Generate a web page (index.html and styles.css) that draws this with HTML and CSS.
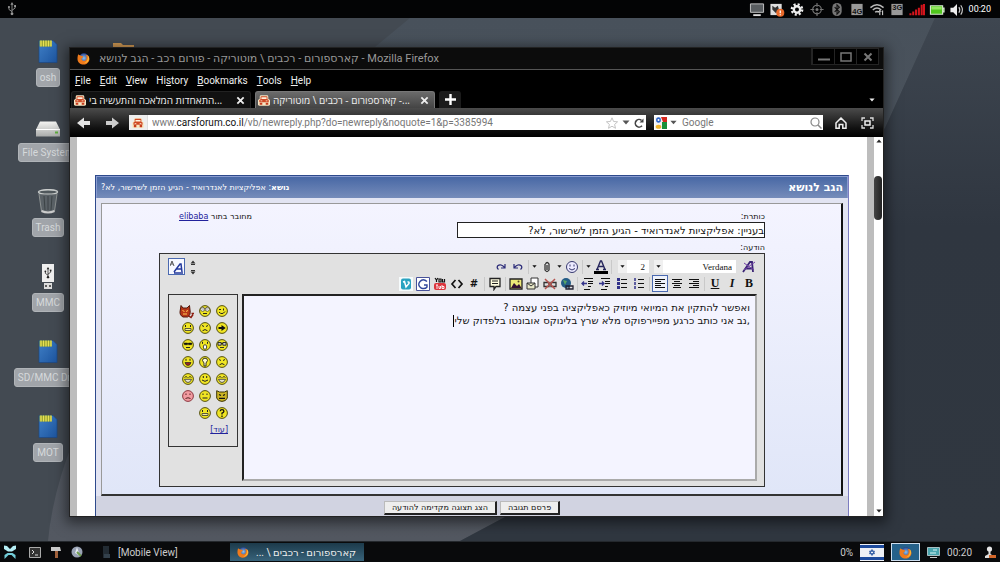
FILE: index.html
```html
<!DOCTYPE html>
<html lang="en">
<head>
<meta charset="utf-8">
<title>Desktop</title>
<link rel="stylesheet" href="styles.css">
</head>
<body>
<svg class="sprite" aria-hidden="true">
  <defs>
    <linearGradient id="sdblue" x1="0" y1="0" x2="1" y2="1"><stop offset="0" stop-color="#3f7fc6"/><stop offset="1" stop-color="#1d559f"/></linearGradient>
    <linearGradient id="silver" x1="0" y1="0" x2="0" y2="1"><stop offset="0" stop-color="#f4f4f2"/><stop offset="1" stop-color="#a9abaa"/></linearGradient>
    <linearGradient id="sweep" x1="0" y1="0" x2="0" y2="1"><stop offset="0" stop-color="#48515b"/><stop offset="1" stop-color="#535861"/></linearGradient>
    <linearGradient id="slate" x1="0" y1="0" x2="0" y2="1"><stop offset="0" stop-color="#3e4650"/><stop offset=".4" stop-color="#2f3640"/><stop offset="1" stop-color="#303740"/></linearGradient>
    <radialGradient id="ffglobe"><stop offset="0" stop-color="#8fc3ee"/><stop offset="1" stop-color="#23408d"/></radialGradient>
  </defs>
  <symbol id="sd" viewBox="0 0 20 24"><path d="M1 1h14l4 4v18H1z" fill="url(#sdblue)" stroke="#1b4785" stroke-width=".7"/><path d="M1.500 1h12v6H1.500z" fill="#8c9a2c"/><path d="M3 1v6M5.500 1v6M8 1v6M10.500 1v6M13 1v6" stroke="#e9e255" stroke-width="1.400"/></symbol>
  <symbol id="firefox" viewBox="0 0 16 16"><circle cx="8.500" cy="7.500" r="6" fill="url(#ffglobe)"/><path d="M1.500 2.500C2 4 3 4 5 4.500 7 5 8 5 7.500 6.500 6.500 7.500 5.500 7.500 5.500 9c.8 2 3.500 2.700 5.300 1.200C12.500 8.500 12 5.500 10.500 3.500 14 4 15.500 6.500 15.300 9 14.800 13 12 15.500 8.200 15.500 4 15.500.6 12.500.6 8.500.6 6 1 4.500 1.500 2.500z" fill="#ee7a1c"/><path d="M13 3.500c2 2.500 2.200 5.500.6 8-1.500 2-4 2.700-6 2.200 4 0 7-4.200 5.400-10.200z" fill="#ffc23a"/></symbol>
  <symbol id="car" viewBox="0 0 14 12"><path d="M2 1.500Q2 0 3.500 0h7Q12 0 12 1.500V4l2 1.500V11q-.500 1-2 1H2Q.5 12 0 11V5.500L2 4z" fill="#f7e6c4"/><path d="M3 4.500V2q0-1 1-1h6q1 0 1 1v2.500l1.500 1V8h-11V5.500z" fill="#cf4a26"/><path d="M4 2.300h6v2H4zM3 6h2v1H3zM9 6h2v1H9z" fill="#fff3df"/><path d="M2 8.500h3V11H2zM9 8.500h3V11H9z" fill="#c63b1c"/></symbol>
  <symbol id="usb" viewBox="0 0 12 16"><path d="M6 2.500V13M6 11 2.500 8.500V6M6 9.500 9.500 7V5" stroke="currentColor" fill="none"/><path d="M6 0l1.800 3H4.200z" fill="currentColor"/><circle cx="6" cy="13.500" r="1.600" fill="currentColor"/><circle cx="2.500" cy="5.700" r="1.200" fill="currentColor"/><path d="M8.400 3.500h2.200v2.200H8.400z" fill="currentColor"/></symbol>
  <symbol id="x" viewBox="0 0 10 10"><path d="M1.500 1.500l7 7M8.500 1.500l-7 7" stroke="currentColor" stroke-width="2" fill="none"/></symbol>
  <symbol id="down" viewBox="0 0 8 5"><path d="M.5.500h7L4 4.500z" fill="currentColor"/></symbol>
  <symbol id="face" viewBox="0 0 12 12"><circle cx="6" cy="6" r="5.400" fill="#f0e523" stroke="#54500e" stroke-width="1"/></symbol>
  <symbol id="s-wink" viewBox="0 0 12 12"><use href="#face"/><path d="M3 4.500h2M7.500 3.500v2M3 7q3 3.500 6-.5" stroke="#222" fill="none"/></symbol>
  <symbol id="s-eyes" viewBox="0 0 12 12"><use href="#face"/><circle cx="3.700" cy="4.300" r="2" fill="#fff" stroke="#333" stroke-width=".7"/><circle cx="8.300" cy="4.300" r="2" fill="#fff" stroke="#333" stroke-width=".7"/><path d="M3.500 4h1M7.500 4h1M4 8.500h4" stroke="#222"/></symbol>
  <symbol id="s-frown" viewBox="0 0 12 12"><use href="#face"/><path d="M3 3.500l2 1M9 3.500l-2 1M3.500 8.800q2.500-2.500 5 0" stroke="#222" fill="none"/></symbol>
  <symbol id="s-mad" viewBox="0 0 12 12"><use href="#face"/><path d="M3.500 3v2M8.500 3v2" stroke="#222"/><path d="M3 6.500h6v2H3z" fill="#f3ee9a" stroke="#333" stroke-width=".8"/></symbol>
  <symbol id="s-arrow" viewBox="0 0 12 12"><use href="#face"/><path d="M2.500 5h3V3L9.700 6 5.500 9V7h-3z" fill="#111"/></symbol>
  <symbol id="s-glasses" viewBox="0 0 12 12"><use href="#face"/><path d="M2 3.500h3.200v2.700H2zM6.800 3.500H10v2.700H6.800zM5 4.500h2M4 8.500h4" stroke="#222" stroke-width=".9" fill="#ccc"/></symbol>
  <symbol id="s-shock" viewBox="0 0 12 12"><use href="#face"/><path d="M3.500 2.800v2M8.500 2.800v2" stroke="#222"/><ellipse cx="6" cy="8" rx="1.700" ry="2.300" fill="#fff" stroke="#222" stroke-width=".8"/></symbol>
  <symbol id="s-cool" viewBox="0 0 12 12"><use href="#face"/><path d="M2 4h3.500v1.700H2.500zM6.500 4H10l-.5 1.700h-3zM5 4.500h2" fill="#111" stroke="#111" stroke-width=".5"/><path d="M4 8.500h4" stroke="#222"/></symbol>
  <symbol id="s-grin" viewBox="0 0 12 12"><use href="#face"/><path d="M4 2.800v2M8 2.800v2" stroke="#222"/><path d="M3 6.500h6Q8.300 9.500 6 9.500 3.700 9.500 3 6.500z" fill="#922" stroke="#222" stroke-width=".7"/></symbol>
  <symbol id="s-idea" viewBox="0 0 12 12"><use href="#face"/><path d="M6 2.200q2.500 0 2.500 2.300L7 7v3H5V7L3.500 4.500Q3.500 2.200 6 2.200z" fill="#fffbd0" stroke="#222" stroke-width=".9"/></symbol>
  <symbol id="s-lol" viewBox="0 0 12 12"><use href="#face"/><path d="M2.500 4.500l1.500-1 1.500 1M6.500 4.500l1.500-1 1.500 1" stroke="#222" fill="none" stroke-width=".9"/><path d="M2.500 6.300h7Q8.500 9.500 6 9.500 3.500 9.500 2.500 6.300z" fill="#e9e7cf" stroke="#333" stroke-width=".8"/></symbol>
  <symbol id="s-smile" viewBox="0 0 12 12"><use href="#face"/><path d="M4.300 3v2M7.700 3v2M3 7q3 2.700 6 0" stroke="#222" fill="none"/></symbol>
  <symbol id="s-flat" viewBox="0 0 12 12"><use href="#face"/><path d="M4 3.500v1.500M8 3.500v1.500M3.500 8h5" stroke="#222" fill="none"/></symbol>
  <symbol id="s-cat" viewBox="0 0 12 12"><path d="M.7.700 3.500 2h5L11.300.700V8Q10 11.400 6 11.400 2 11.400.7 8z" fill="#cdb625" stroke="#3c3508"/><path d="M3 4.500l2 1M9 4.500l-2 1M3 8.300h6" stroke="#111" stroke-width="1.300"/></symbol>
  <symbol id="s-blush" viewBox="0 0 12 12"><circle cx="6" cy="6" r="5.400" fill="#f29aa0" stroke="#8d3840" stroke-width="1"/><path d="M4 3.500v1.500M8 3.500v1.500M3.500 8.500q2.500-1.500 5 0" stroke="#522" fill="none"/></symbol>
  <symbol id="s-ask" viewBox="0 0 12 12"><use href="#face"/><path d="M4.200 4.300Q4.300 2.700 6 2.700q1.900 0 1.900 1.500Q7.900 5.400 6 6.200v1.200M6 8.500V10" stroke="#111" stroke-width="1.300" fill="none"/></symbol>
  <symbol id="s-devil" viewBox="0 0 15 14"><path d="M2 .5 4 3h4l2.500-2.500L11 5q1 5-2.500 7H4Q0 10 1.300 5z" fill="#b73719" stroke="#52180c"/><path d="M3.500 5.500l2 1M9 5.500l-2 1M4 9h4" stroke="#fc5" /><path d="M9 10.500l3 2 2-3M12.500 8.500h2.500" stroke="#8d1d10" stroke-width="1.500" fill="none"/></symbol>
</svg>

<div class="screen">
  <header class="statusbar">
    <svg class="usb" width="12" height="14"><use href="#usb"/></svg>
    <div class="tray">
      <svg viewBox="0 0 16 16"><path d="M1 2h14v9H1z" fill="#595d60" stroke="#c6c6c6"/><path d="M4 13h8v2H4z" fill="#ddd"/></svg>
      <svg viewBox="0 0 16 16"><path d="M1 2h12v12H1z" fill="#ddd"/><path d="M3 4l3 2 3-2 1 4-3 4-4-4z" fill="#333"/><circle cx="11.500" cy="11.500" r="4.300" fill="#e8692a"/><path d="M11.500 9v3M11.500 13v1" stroke="#fff" stroke-width="1.400"/></svg>
      <svg viewBox="0 0 16 16"><circle cx="8" cy="8" r="5.500" fill="none" stroke="#eee" stroke-width="2.600" stroke-dasharray="2.200 2.120"/><circle cx="8" cy="8" r="3.400" fill="none" stroke="#eee" stroke-width="2.600"/></svg>
      <svg viewBox="0 0 16 16"><circle cx="8" cy="8" r="4.600" fill="none" stroke="#777" stroke-width="1.200"/><circle cx="8" cy="8" r="1.600" fill="#777"/><path d="M8 1v4M8 11v4M1 8h4M11 8h4" stroke="#777" stroke-width="1.200"/></svg>
      <svg viewBox="0 0 16 16"><rect x="3" y="1" width="10" height="14" rx="5" fill="#777"/><path d="M5.500 5.500l5 5L8 13V3l2.500 2.500-5 5" stroke="#111" fill="none" stroke-width="1.200"/></svg>
      <svg viewBox="0 0 16 16"><path d="M2 2h12v12H2z" fill="#999"/><text x="3" y="13" class="net">4G</text></svg>
      <svg viewBox="0 0 16 16"><path d="M1 6q7-6 14 0M3.500 8.500q4.500-4 9 0M6 11q2-1.800 4 0" stroke="#bbb" fill="none" stroke-width="1.500"/><path d="M11 14V9M9.500 10.500 11 9l1.500 1.500M14 9v5" stroke="#eee" fill="none"/></svg>
      <svg viewBox="0 0 16 16"><path d="M2 2h12v12H2z" fill="#999"/><text x="3" y="9" class="net">3G</text></svg>
      <svg viewBox="0 0 16 16"><path d="M1 14v-2M4 14v-4M7 14V8M10 14V6M13 14V3M15.500 14V2" stroke="#d4141c" stroke-width="2.200"/></svg>
      <svg viewBox="0 0 16 16"><path d="M1 4h13v9H1zM14 6.500h1.500v4H14" fill="#4fc61c" stroke="#d9e8d2" stroke-width="1.200"/><path d="M2 5h11v3H2z" fill="#93e661"/></svg>
      <svg viewBox="0 0 16 16"><path d="M1 6h3l4-4v13l-4-4H1z" fill="#eee"/><path d="M10 5.500q2 3 0 6M12 3.500q3.500 5 0 10" stroke="#ccc" fill="none" stroke-width="1.200"/></svg>
      <time class="clock">00:20</time>
    </div>
  </header>

  <main class="desktop">
    <svg class="wallpaper" viewBox="0 0 1000 523" preserveAspectRatio="none">
      <path d="M0 0h1000v523H0z" fill="#434a52"/>
      <path d="M48 523Q56 440 110 350L375 29 410 0H935L885 110 505 499 460 523z" fill="url(#sweep)"/>
      <path d="M1000 0H935L885 110 505 499 460 523H1000z" fill="url(#slate)"/>
    </svg>

    <div class="shortcuts">
      <div class="shortcut"><svg width="20" height="24"><use href="#sd"/></svg><span>osh</span></div>
      <div class="shortcut"><svg width="26" height="24" viewBox="0 0 26 24"><path d="M5 7h16l4 8v7H1v-7z" fill="url(#silver)"/><path d="M1 15h24" stroke="#fff"/><path d="M20 18h3" stroke="#5fae3f" stroke-width="2"/></svg><span>File System</span></div>
      <div class="shortcut"><svg width="22" height="25" viewBox="0 0 22 25"><ellipse cx="11" cy="3" rx="9.500" ry="2.300" fill="#50585c" stroke="#c9cccb" stroke-width="1.500"/><path d="M2 5l2.500 17q6.500 3 13 0L20 5" fill="#6b7274" fill-opacity=".6" stroke="#8d9292"/><path d="M7 7l1 14M11 7v14M15 7l-1 14" stroke="#3c4346"/><path d="M4.500 22q6.500 3 13 0" stroke="#ccc" stroke-width="2" fill="none"/></svg><span>Trash</span></div>
      <div class="shortcut"><svg width="14" height="25" viewBox="0 0 14 25"><path d="M1 0h12v18H1z" fill="#efefef"/><path d="M3 19h8v6H3z" fill="#ddd"/><path d="M5 21v2M9 21v2" stroke="#333" stroke-width="1.500"/><use href="#usb" x="2" y="3" width="10" height="12" color="#222"/></svg><span>MMC</span></div>
      <div class="shortcut"><svg width="20" height="24"><use href="#sd"/></svg><span>SD/MMC Driv</span></div>
      <div class="shortcut"><svg width="20" height="24"><use href="#sd"/></svg><span>MOT</span></div>
    </div>
    <svg class="folder" width="24" height="20" viewBox="0 0 24 20"><path d="M1 1h8l2 2h11v15H1z" fill="#d19a54"/><path d="M1 5h22v13H1z" fill="#eab876"/></svg>

    <section class="window">
      <div class="titlebar">
        <svg width="13" height="13"><use href="#firefox"/></svg>
        <h1 dir="ltr">קארספורום - רכבים \ מוטוריקה - פורום רכב - הגב לנושא - Mozilla Firefox</h1>
        <div class="wincontrols">
          <button aria-label="Minimize"><svg width="12" height="10" viewBox="0 0 12 10"><path d="M0 7.500h12" stroke="#777" stroke-width="2"/></svg></button>
          <button aria-label="Maximize"><svg width="12" height="10" viewBox="0 0 12 10"><path d="M1 1h10v8H1z" stroke="#777" stroke-width="1.500" fill="none"/></svg></button>
          <button aria-label="Close"><svg width="10" height="10" color="#777"><use href="#x"/></svg></button>
        </div>
      </div>
      <nav class="menubar">
        <button><u>F</u>ile</button><button><u>E</u>dit</button><button><u>V</u>iew</button><button>Hi<u>s</u>tory</button><button><u>B</u>ookmarks</button><button><u>T</u>ools</button><button><u>H</u>elp</button>
      </nav>
      <div class="tabs">
        <div class="tab"><svg width="12" height="11"><use href="#car"/></svg><span dir="ltr">התאחדות המלאכה והתעשיה בי...</span><button aria-label="Close tab"><svg width="9" height="9"><use href="#x"/></svg></button></div>
        <div class="tab active"><svg width="12" height="11"><use href="#car"/></svg><span dir="ltr">קארספורום - רכבים \ מוטוריקה -...</span><button aria-label="Close tab"><svg width="9" height="9"><use href="#x"/></svg></button></div>
        <button class="newtab" aria-label="New tab"><svg width="11" height="11" viewBox="0 0 11 11"><path d="M5.500 0v11M0 5.500h11" stroke="#fff" stroke-width="2.400"/></svg></button>
        <button class="alltabs" aria-label="List all tabs"><svg width="6" height="4"><use href="#down"/></svg></button>
      </div>
      <div class="navbar">
        <button aria-label="Back"><svg width="14" height="12" viewBox="0 0 14 12"><path d="M0 6l7-5.500V4h6v4H7v3.500z" fill="#e4e4e4"/></svg></button>
        <button class="forward" aria-label="Forward"><svg width="14" height="12" viewBox="0 0 14 12"><path d="M14 6 7 .5V4H1v4h6v3.500z" fill="#ccc"/></svg></button>
        <div class="urlbar">
          <span class="identity"><svg width="12" height="10"><use href="#car"/></svg></span>
          <span class="url" role="textbox">www.<b>carsforum.co.il</b>/vb/newreply.php?do=newreply&amp;noquote=1&amp;p=3385994</span>
          <svg width="12" height="12" viewBox="0 0 12 12"><path d="M6 .8 7.600 4.500l4 .3-3 2.600.9 3.900L6 9.200l-3.500 2.100.9-3.900-3-2.600 4-.3z" fill="#fff" stroke="#c4c4c4"/></svg>
          <svg width="8" height="5" color="#555"><use href="#down"/></svg>
          <svg width="10" height="10" viewBox="0 0 10 10"><path d="M8 7.800A3.800 3.800 0 1 1 7.500 2.300" stroke="#444" stroke-width="1.600" fill="none"/><path d="M5.500 4.500h4v-4z" fill="#444"/></svg>
        </div>
        <div class="searchbar">
          <svg width="12" height="12" viewBox="0 0 12 12"><path d="M0 0h12v12H0z" fill="#f3f3f3"/><path d="M6 0h6v5H8z" fill="#d6281f"/><path d="M7 5h5v7H7z" fill="#188f3b"/><ellipse cx="3.500" cy="3" rx="2.400" ry="2.700" fill="#2a62c8"/><ellipse cx="3.500" cy="9.700" rx="2.800" ry="2" fill="#f1b52b"/><circle cx="3.500" cy="3" r="1" fill="#fff"/></svg>
          <svg width="7" height="5" color="#555"><use href="#down"/></svg>
          <input type="search" placeholder="Google" aria-label="Search">
          <svg width="12" height="12" viewBox="0 0 12 12"><circle cx="5" cy="5" r="4" stroke="#888" stroke-width="1.200" fill="none"/><path d="M8 8l3.500 3.500" stroke="#888" stroke-width="1.500"/></svg>
        </div>
        <button aria-label="Home"><svg width="12" height="12" viewBox="0 0 12 12"><path d="M1 6 6 1l5 5v5.200H7.800V7.500H4.200v3.700H1z" stroke="#eee" stroke-width="1.500" fill="none"/></svg></button>
        <button class="full" aria-label="Full screen"><svg width="13" height="12" viewBox="0 0 13 12"><path d="M1 4V1h3M9 1h3v3M12 8v3H9M4 11H1V8" stroke="#ddd" stroke-width="1.300" fill="none"/><path d="M4 4h5v4H4z" stroke="#eee" stroke-width="1.500" fill="none"/></svg></button>
      </div>

      <div class="viewport">
        <div class="page" dir="rtl" lang="he">
          <form class="panel">
            <div class="panelhead">
              <h2>הגב לנושא</h2>
              <p><b>נושא</b>: אפליקציות לאנדרואיד - הגיע הזמן לשרשור, לא?</p>
            </div>
            <div class="panelbody">
              <div class="fields">
                <div class="subjectrow">
                  <div class="subject">
                    <label for="subject">כותרת:</label>
                    <input id="subject" type="text" value="בעניין: אפליקציות לאנדרואיד - הגיע הזמן לשרשור, לא?">
                  </div>
                  <p class="login">מחובר בתור <a href="#user">elibaba</a></p>
                </div>
                <label for="message">הודעה:</label>
                <div class="editor">
                  <div class="toolbars">
                    <div class="rows">
                      <div class="row">
                        <button type="button" aria-label="הסר עיצוב"><svg viewBox="0 0 14 14"><path d="M1 12 8 2h2l1 10M4 8.500h7" stroke="#3a2474" stroke-width="1.800" fill="none"/><path d="M2 3l10 7M2 10l11-8" stroke="#7240a8" stroke-width="1"/></svg></button>
                        <span class="drop font"><select aria-label="גופן"><option>Verdana</option></select><svg width="5" height="3"><use href="#down"/></svg></span>
                        <span class="drop size"><select aria-label="גודל"><option>2</option></select><svg width="5" height="3"><use href="#down"/></svg></span>
                        <i class="sep"></i>
                        <button type="button" aria-label="צבע"><svg viewBox="0 0 14 14"><path d="M3 9.500 6.500 1h1L11 9.500M4.500 6.500h5M2 9.500h3M9 9.500h3" stroke="#26265c" stroke-width="1.400" fill="none"/><path d="M0 11h14v3H0z" fill="#000"/></svg></button>
                        <svg class="tick" width="5" height="3"><use href="#down"/></svg>
                        <i class="sep"></i>
                        <button type="button" aria-label="סמיילי"><svg viewBox="0 0 14 14"><circle cx="7" cy="7" r="5.500" fill="#eceaff" stroke="#36386e"/><path d="M5 4.500v2M9 4.500v2M4 8.500q3 3 6 0" stroke="#36386e" fill="none"/></svg></button>
                        <svg class="tick" width="5" height="3"><use href="#down"/></svg>
                        <button type="button" aria-label="קובץ מצורף"><svg viewBox="0 0 14 14"><path d="M5 4v6q2 3 4 0V4Q7 1 5.500 4M7 5v5" stroke="#333" stroke-width="1.300" fill="none"/></svg></button>
                        <svg class="tick" width="5" height="3"><use href="#down"/></svg>
                        <i class="sep"></i>
                        <button type="button" aria-label="בטל"><svg viewBox="0 0 14 14"><path d="M3 4v4h4M3 8q4-5 7.500-2 1 2-1 3.500" stroke="#2b2b78" stroke-width="1.200" fill="none"/></svg></button>
                        <button type="button" aria-label="בצע שוב"><svg viewBox="0 0 14 14"><path d="M11 4v4H7M11 8Q7 3 3.500 6 2.500 8 4.500 9.500" stroke="#2b2b78" stroke-width="1.200" fill="none"/></svg></button>
                      </div>
                      <div class="row">
                        <button type="button" class="glyph"><b>B</b></button>
                        <button type="button" class="glyph"><em>I</em></button>
                        <button type="button" class="glyph"><u>U</u></button>
                        <i class="sep"></i>
                        <button type="button" aria-label="יישור לימין"><svg viewBox="0 0 14 14"><path d="M2 2.500h10M6 4.500h6M2 6.500h10M6 8.500h6M2 10.500h10" stroke="#111"/></svg></button>
                        <button type="button" aria-label="מרכז"><svg viewBox="0 0 14 14"><path d="M2 2.500h10M4 4.500h6M2 6.500h10M4 8.500h6M3 10.500h8" stroke="#111"/></svg></button>
                        <button type="button" class="pressed" aria-label="יישור לשמאל"><svg viewBox="0 0 14 14"><path d="M2 2.500h10M2 4.500h6M2 6.500h10M2 8.500h6M2 10.500h10" stroke="#111"/></svg></button>
                        <i class="sep"></i>
                        <button type="button" aria-label="רשימה ממוספרת"><svg viewBox="0 0 14 14"><path d="M6 2.500h6M6 6.500h6M6 10.500h6" stroke="#111"/><path d="M3 1v3M3 5v3M3 9v3" stroke="#33338a" stroke-width="1.500"/></svg></button>
                        <button type="button" aria-label="רשימה"><svg viewBox="0 0 14 14"><path d="M6 2.500h6M6 6.500h6M6 10.500h6" stroke="#111"/><path d="M2 1h3v3H2zM2 5h3v3H2zM2 9h3v3H2z" fill="#33338a"/></svg></button>
                        <button type="button" aria-label="הקטן הזחה"><svg viewBox="0 0 14 14"><path d="M3 1.500h9M7 4.500h5M7 6.500h5M7 9.500h3M3 12.500h6" stroke="#111"/><path d="M1 6.500h5M4 4.500l2 2-2 2" stroke="#33338a" stroke-width="1.300" fill="none"/></svg></button>
                        <button type="button" aria-label="הגדל הזחה"><svg viewBox="0 0 14 14"><path d="M3 1.500h9M7 4.500h5M7 6.500h5M7 9.500h3M3 12.500h6" stroke="#111"/><path d="M1 6.500h5M3 4.500l-2 2 2 2" stroke="#33338a" stroke-width="1.300" fill="none"/></svg></button>
                        <i class="sep"></i>
                        <button type="button" aria-label="קישור"><svg viewBox="0 0 14 14"><circle cx="6" cy="6" r="5" fill="#245c86"/><path d="M3 3l4 1-2 4z" fill="#58a565"/><path d="M6 9h3v3H6zM9 9h4v3H9z" stroke="#223" stroke-width="1.300" fill="none"/></svg></button>
                        <button type="button" aria-label="הסר קישור"><svg viewBox="0 0 14 14"><path d="M1 5.500h5v4H1zM8 5.500h5v4H8z" stroke="#333" stroke-width="1.300" fill="none"/><path d="M2 2l10 10M12 2 2 12" stroke="#b5544f" stroke-width="1.500"/></svg></button>
                        <button type="button" aria-label="דואר"><svg viewBox="0 0 14 14"><path d="M5 1h7v9H5z" fill="#fff" stroke="#333"/><path d="M1 6h8v6H1z" fill="#e8e8c8" stroke="#333"/><path d="M1 6l4 3 4-3" stroke="#333" fill="none"/></svg></button>
                        <button type="button" aria-label="תמונה"><svg viewBox="0 0 14 14"><path d="M1 2h12v10H1z" fill="#eeea78" stroke="#222" stroke-width="1.300"/><path d="M2 11l3-5 3 3 2-2 2.500 4z" fill="#313"/><circle cx="9.500" cy="4.500" r="1" fill="#542"/></svg></button>
                        <i class="sep"></i>
                        <button type="button" aria-label="ציטוט"><svg viewBox="0 0 14 14"><path d="M2 1.500h10v8H8l-2 3v-3H2z" fill="#fffde0" stroke="#222" stroke-width="1.300"/><path d="M4 4h6M4 6.500h6" stroke="#222"/></svg></button>
                        <i class="sep"></i>
                        <button type="button" class="glyph hash">#</button>
                        <button type="button" aria-label="HTML"><svg viewBox="0 0 14 14"><path d="M5.500 3 2 7l3.500 4M8.500 3 12 7l-3.500 4" stroke="#111" stroke-width="1.700" fill="none"/></svg></button>
                        <button type="button" aria-label="YouTube"><svg viewBox="0 0 14 14"><path d="M2 1l1.500 2L5 1M3.500 3v2M6 2h2v3H6zM9.500 2v3h2V2" stroke="#111" stroke-width="1.200" fill="none"/><rect x="1" y="6" width="12" height="7" rx="2" fill="#dc343c"/><path d="M3 8h2M4 8v4M6 9v2.500h1.500V9M9 8v3.500h2V9.500H9" stroke="#fff" stroke-width=".9" fill="none"/></svg></button>
                        <button type="button" aria-label="Google"><svg viewBox="0 0 14 14"><path d="M.5.500h13v13H.5z" fill="#fff" stroke="#48529a"/><path d="M11 4.500Q7 1 4 4.500T5 11q4 1.500 6-1V8H8" stroke="#31479c" stroke-width="1.400" fill="none"/></svg></button>
                        <button type="button" aria-label="Vimeo"><svg viewBox="0 0 14 14"><path d="M0 0h14v14H0z" fill="#f6fbfc"/><rect x="2" y="1.500" width="10" height="11" rx="2" fill="#2aa3c0"/><path d="M4 5l1.500-.5L7 10l3-3.500q.5-2-1.500-1.500" stroke="#fff" stroke-width="1.500" fill="none"/></svg></button>
                      </div>
                    </div>
                    <div class="resize">
                      <svg width="8" height="18" viewBox="0 0 8 18"><path d="M2 6.500h4M2 12.500h4" stroke="#333"/><path d="M1.500 5.500h5L4 2.500zM1.500 13.500h5L4 16.500z" fill="#333"/></svg>
                      <button type="button" class="mode" aria-label="מצב עריכה"><svg width="14" height="14" viewBox="0 0 14 14"><path d="M0 6l2-5 2 5M1 4h2" stroke="#555" fill="none"/><path d="M4 12l6-8h1l1 8M6 9h6M4 13h9" stroke="#23389c" stroke-width="1.500" fill="none"/></svg></button>
                    </div>
                  </div>
                  <div class="compose">
                    <div class="message">
                      <textarea id="message">ואפשר להתקין את המיואי מיוזיק כאפליקציה בפני עצמה ?
,נב אני כותב כרגע מפיירפוקס מלא שרץ בלינוקס אובונטו בלפדוק שלי</textarea>
                      <span class="caret"></span>
                    </div>
                    <div class="smilies">
                      <div class="grid">
                        <svg><use href="#s-wink"/></svg><svg><use href="#s-eyes"/></svg><svg class="big"><use href="#s-devil"/></svg>
                        <svg><use href="#s-arrow"/></svg><svg><use href="#s-frown"/></svg><svg><use href="#s-mad"/></svg>
                        <svg><use href="#s-glasses"/></svg><svg><use href="#s-shock"/></svg><svg><use href="#s-cool"/></svg>
                        <svg><use href="#s-frown"/></svg><svg><use href="#s-idea"/></svg><svg><use href="#s-grin"/></svg>
                        <svg><use href="#s-lol"/></svg><svg><use href="#s-smile"/></svg><svg><use href="#s-lol"/></svg>
                        <svg><use href="#s-cat"/></svg><svg><use href="#s-flat"/></svg><svg><use href="#s-blush"/></svg>
                        <svg><use href="#s-ask"/></svg><svg><use href="#s-mad"/></svg>
                      </div>
                      <a href="#more">[עוד]</a>
                    </div>
                  </div>
                </div>
              </div>
            </div>
            <div class="actions">
              <button type="submit">פרסם תגובה</button>
              <button type="button">הצג תצוגה מקדימה להודעה</button>
            </div>
          </form>
        </div>
        <div class="scrollbar">
          <svg width="6" height="4" class="up"><use href="#down"/></svg>
          <span class="thumb"></span>
          <svg width="6" height="4"><use href="#down"/></svg>
        </div>
      </div>
    </section>
  </main>

  <footer class="taskbar">
    <div class="launchers">
      <svg class="logo" width="14" height="16" viewBox="0 0 14 16"><path d="M1 1.500 4 2l3 3 3-3 3-.5v3.500L9 7.500H5L1 5z" fill="#b5edf5"/><path d="M1.500 15V11l3-2h5l3 2v4l-4-4h-3z" fill="#72cdd9"/></svg>
      <svg width="12" height="11" viewBox="0 0 12 11"><path d="M.5.500h11v10H.5z" fill="#333" stroke="#aaa"/><path d="M3 3l2 2-2 2M6 8h3" stroke="#ddd" fill="none"/></svg>
      <svg width="12" height="12" viewBox="0 0 12 12"><path d="M1 1h9l1 4H1z" fill="#c9c9c9"/><path d="M5 5h3v7H5z" fill="#a1613c"/></svg>
      <svg width="12" height="12" viewBox="0 0 12 12"><circle cx="6" cy="6" r="5.500" fill="#9aa3b5"/><path d="M6 1 4 7l5 3z" fill="#e4eaf1"/><path d="M6 6l4 4" stroke="#6c9a4e" stroke-width="2"/></svg>
    </div>
    <button class="task"><svg width="9" height="12" viewBox="0 0 9 12"><path d="M1 0h6v12H1z" fill="#222b33"/><path d="M2 8h6v4H2z" fill="#33404b"/></svg>[Mobile View]</button>
    <button class="task current"><svg width="12" height="12"><use href="#firefox"/></svg><span dir="rtl">קארספורום - רכבים \ ...</span></button>
    <div class="indicators">
      <span class="cpu">0%</span>
      <svg width="24" height="17" viewBox="0 0 24 17"><path d="M0 0h24v17H0z" fill="#eef0f5"/><path d="M0 2.500h24M0 14.500h24" stroke="#1d4a9d" stroke-width="3"/><path d="M12 5.500l2.500 4.200h-5zM12 11.500 9.500 7.200h5z" fill="none" stroke="#24519f" stroke-width=".9"/></svg>
      <span class="workspace"><svg width="13" height="13"><use href="#firefox"/></svg></span>
      <svg class="screenicon" width="13" height="11" viewBox="0 0 13 11"><path d="M.5.500h12v8H.5z" fill="#4ba5ae" stroke="#a9c0c4"/><path d="M3 10.500h7" stroke="#ccc"/><path d="M3 6h6M6 3h4" stroke="#d8f5f5"/></svg>
      <time>00:20</time>
      <svg class="user" width="12" height="13" viewBox="0 0 12 13"><circle cx="5.500" cy="3" r="2.600" fill="#e6e6e6"/><path d="M4.500 5h2v3l3 2v2H1v-2l3.500-2z" fill="#ddd"/><path d="M5 9h7v3H5z" fill="#d3672b"/></svg>
    </div>
  </footer>
</div>
</body>
</html>
```
FILE: styles.css
```css
* { box-sizing: border-box; }
body { margin: 0; font-family: Roboto, "DejaVu Sans", sans-serif; font-size: 10px; color: #ddd; }
button { border: 0; padding: 0; background: none; color: inherit; font: inherit; display: inline-flex; align-items: center; justify-content: center; }
svg { display: block; flex: none; }
h1, h2, p { margin: 0; font-size: inherit; font-weight: normal; }
.sprite { position: absolute; width: 0; height: 0; }
.screen { display: flex; flex-direction: column; height: 100vh; overflow: hidden; background: #000; }

.statusbar { display: flex; align-items: center; justify-content: space-between; flex: none; height: 18px; padding: 0 9px 0 6px; background: #030405; }
.usb { color: #999; }
.tray { display: flex; align-items: center; gap: 4px; }
.tray svg { width: 16px; height: 15px; }
.net { font: bold 8px "Liberation Sans", sans-serif; fill: #111; }
.clock { font: 9px Roboto, sans-serif; color: #fff; }

.desktop { position: relative; flex: 1; min-height: 0; overflow: hidden; }
.wallpaper { position: absolute; inset: 0; width: 100%; height: 100%; }
.shortcuts { position: absolute; top: 21px; left: 0; width: 96px; display: flex; flex-direction: column; }
.shortcut { display: flex; flex-direction: column; align-items: center; height: 75px; gap: 4px; }
.shortcut svg { height: 25px; }
.shortcut span { padding: 0 3px; border: 1px solid #b0b4b8; border-radius: 3px; background: #a1a5aa; color: #d6d9db; line-height: 17px; white-space: nowrap; }
.folder { position: absolute; left: 112px; top: 24px; }

.window { position: absolute; top: 29px; right: 116px; bottom: 24px; left: 69px; display: flex; flex-direction: column; border: 1px solid #222; background: #000; box-shadow: 0 3px 12px 3px rgba(0, 0, 0, .5); }
.titlebar { display: flex; align-items: center; flex: none; height: 22px; padding-left: 7px; gap: 9px; background: #0c0c0c; border-bottom: 1px solid #555; color: #999; font-size: 11px; }
.titlebar h1 { flex: 1; white-space: nowrap; }
.wincontrols { display: flex; align-self: flex-start; margin-right: 4px; border: 1px solid #242424; background: #000; }
.wincontrols button { width: 22px; height: 15px; border-left: 1px solid #242424; }
.menubar { display: flex; flex: none; align-items: center; gap: 9px; height: 21px; padding: 0 5px; color: #eee; }
.tabs { display: flex; flex: none; gap: 4px; height: 17px; padding: 0 1px; color: #eee; font-family: "Open Sans", sans-serif; }
.tab { display: flex; align-items: center; width: 180px; padding: 0 5px 0 2px; gap: 3px; border: 1px solid #222; border-bottom: 0; border-radius: 3px 3px 0 0; background: #111; }
.tab span { flex: 1; white-space: nowrap; }
.tab.active { background: linear-gradient(#6b6b6b, #444); border-color: #777; }
.newtab { width: 22px; border-radius: 3px 3px 0 0; background: #1b1b1b; }
.alltabs { margin-left: auto; padding-right: 7px; }
.navbar { display: flex; flex: none; align-items: center; height: 29px; padding: 0 9px 0 7px; background: linear-gradient(#4b4b4b, #111 70%, #000); }
.navbar .forward { margin: 0 10px 0 14px; }
.urlbar { display: flex; align-items: center; flex: 1; height: 15px; gap: 4px; padding-right: 2px; background: #fff; color: #777; }
.identity { display: flex; align-items: center; justify-content: center; width: 19px; height: 15px; background: #eee; border-right: 1px solid #ddd; }
.url { flex: 1; white-space: nowrap; overflow: hidden; line-height: 15px; }
.url b { color: #111; font-weight: normal; }
.searchbar { display: flex; align-items: center; width: 169px; height: 15px; margin: 0 12px 0 8px; padding: 0 1px; gap: 3px; background: #fff; }
.searchbar input { flex: 1; min-width: 0; margin-left: 2px; padding: 0; border: 0; outline: 0; background: none; color: #777; font: inherit; }
.searchbar input::placeholder { color: #777; }
.navbar .full { margin-left: 14px; }

.viewport { display: flex; flex: 1; min-height: 0; background: #fff; border-left: 7px solid #bdbdbd; }
.page { flex: 1; overflow: hidden; padding: 38px 18px 0; color: #111; font-family: "DejaVu Sans", sans-serif; font-size: 8px; }
.scrollbar { display: flex; flex-direction: column; align-items: flex-end; width: 16px; padding: 2px 1px 3px 0; border-left: 7px solid #bdbdbd; color: #222; }
.up { rotate: 180deg; }
.thumb { width: 8px; height: 44px; margin: 33px 0 auto; border-radius: 4px; background: linear-gradient(90deg, #444, #222); }

.panel { border: 1px solid #2e4a8c; border-bottom: 0; border-right-color: #7c7cc0; background: #d1d3e1; }
.panelhead { display: flex; align-items: center; justify-content: space-between; height: 22px; padding: 0 4px; border: 1px solid #8a9cd0; border-bottom: 0; background: linear-gradient(#4868a5, #768cba); color: #fff; }
.panelhead h2 { font-size: 11px; font-weight: bold; }
.panelbody { padding: 5px 5px 0; background: #e2e4f2; }
.fields { padding: 8px 76px 7px 57px; border: 1px solid #999; border-right: 2px solid #111; border-bottom: 2px solid #333; background: linear-gradient(#f4f4ff, #e0e6f8); }
.fields label { display: block; line-height: 10px; }
.subjectrow { display: flex; justify-content: space-between; margin-bottom: 5px; }
.subject { width: 308px; }
.subject input { display: block; width: 100%; height: 16px; padding: 0; border: 1px solid #222; background: #fff; color: #111; font: 10px "DejaVu Sans", sans-serif; }
.login { margin-left: 20px; line-height: 10px; }
.login a, .smilies a { color: #22229c; }

.editor { padding: 4px 7px 5px 8px; border: 1px solid #333; background: #e1e1e1; }
.toolbars { display: flex; justify-content: space-between; margin-bottom: 2px; }
.row { display: flex; align-items: center; height: 17px; gap: 1px; }
.row button { width: 16px; height: 17px; }
.row button svg { width: 14px; height: 14px; }
.row .pressed { border: 1px solid #4a69b0; background: #eef2fb; }
.row .glyph { font: 12px "Liberation Serif", serif; font-weight: bold; color: #111; }
.row .hash { font-family: "DejaVu Sans", sans-serif; font-size: 10px; }
.sep { width: 1px; height: 14px; margin: 0 1px; background: #c9c9c9; }
.drop { display: flex; align-items: center; margin-right: 4px; background: #f0f0f0; }
.drop svg { margin: 0 2px; }
.drop select { appearance: none; height: 13px; padding: 0 4px; border: 0; background: #fff; color: #111; direction: rtl; font: 9px "Liberation Serif", serif; }
.font select { width: 73px; }
.size select { width: 22px; }
.size { margin-left: 4px; }
.tick { color: #111; margin: 0 1px; }
.resize { display: flex; align-items: flex-start; gap: 4px; }
.mode { width: 17px; height: 17px; border: 1px solid #4a69b0; background: #f6f8ff; }
.compose { display: flex; align-items: flex-start; gap: 4px; }
.message { position: relative; flex: 1; height: 187px; }
.message textarea { display: block; width: 100%; height: 100%; padding: 5px; border: 2px solid #222; border-right-color: #aaa; border-bottom-color: #aaa; background: #f4f4ff; color: #111; font: 10px/13px "DejaVu Sans", sans-serif; resize: none; overflow: hidden; }
.caret { position: absolute; top: 21px; right: 303px; width: 1px; height: 12px; background: #000; }
.smilies { width: 70px; height: 153px; padding: 10px 9px 0 0; border: 1px solid #333; }
.grid { display: grid; grid-template-columns: 12px 12px 15px; grid-auto-rows: 12px; gap: 5px; margin-bottom: 6px; }
.grid svg { width: 12px; height: 12px; }
.grid .big { width: 15px; height: 14px; }
.actions { display: flex; align-items: flex-start; justify-content: center; gap: 3px; padding: 5px 0; }
.actions button { height: 14px; padding: 0 7px; border: 1px solid #bbb; border-right: 2px solid #222; border-bottom: 2px solid #222; background: #eee; color: #111; line-height: 10px; }

.taskbar { display: flex; align-items: center; flex: none; height: 21px; padding: 0 4px 0 3px; background: #090a0c; border-top: 1px solid #24282d; color: #ccc; }
.launchers { display: flex; align-items: center; gap: 9px; margin-right: 19px; }
.logo { margin-right: 3px; }
.task { height: 18px; gap: 7px; }
.task.current { width: 134px; margin-left: 52px; background: linear-gradient(#1c3a4b, #38637a); color: #eee; }
.indicators { display: flex; align-items: center; gap: 7px; margin-left: auto; }
.workspace { display: flex; align-items: center; justify-content: center; width: 29px; height: 18px; border: 1px solid #cde; background: #25618a; }
.user { margin-left: 5px; }
```
